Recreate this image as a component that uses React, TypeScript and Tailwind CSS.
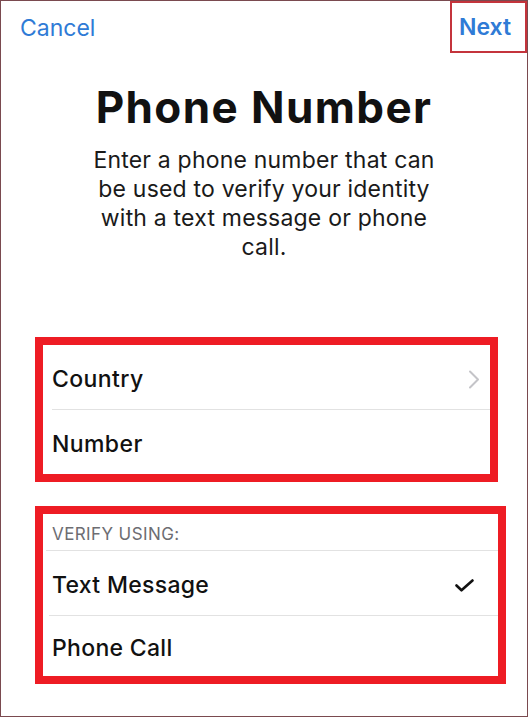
import React from "react";

function Chevron() {
  return (
    <svg width="12" height="19" viewBox="0 0 12 19" fill="none">
      <polyline points="2,1.5 10,9.5 2,17.5" stroke="#c4c4c8" strokeWidth="2" strokeLinecap="round" strokeLinejoin="round" />
    </svg>
  );
}

function Check() {
  return (
    <svg width="19" height="13" viewBox="0 0 19 13" fill="none">
      <polyline points="1.5,6.5 6.5,11.3 17.5,1.5" stroke="#111111" strokeWidth="2.6" strokeLinecap="round" strokeLinejoin="round" />
    </svg>
  );
}

export default function App() {
  return (
    <div className="w-[528px] h-[717px] border border-[#7a4a4f] bg-white flex flex-col font-['Inter',sans-serif] text-[#111111] overflow-hidden">
      <div className="flex justify-between items-start h-[52px]">
        <div className="pl-[19px] pt-[13px] text-[23px] leading-[28px] text-[#2f7bd6]">Cancel</div>
        <div className="w-[77px] h-[52px] border-2 border-[#c4343c] pl-[7px] pt-[10px] text-[23px] leading-[28px] font-semibold text-[#2f7bd6]">
          Next
        </div>
      </div>
      <h1 className="mt-[28px] text-center text-[44px] leading-[53px] font-bold tracking-[1.4px]">Phone Number</h1>
      <p className="mt-[12px] text-center text-[23px] leading-[29px] tracking-[0.2px] text-[#1a1a1a]">
        Enter a phone number that can
        <br />
        be used to verify your identity
        <br />
        with a text message or phone
        <br />
        call.
      </p>
      <div className="mt-[75px] ml-[34px] w-[463px] border-[8px] border-[#ee1c24] bg-white">
        <div className="h-[64px] flex items-center justify-between pl-[9px] pr-[10px] pt-[4px]">
          <span className="text-[23px] font-medium tracking-[0.4px]">Country</span>
          <Chevron />
        </div>
        <div className="ml-[9px] h-px bg-[#e2e2e2]" />
        <div className="h-[64px] flex items-center pl-[9px] pt-[4px]">
          <span className="text-[23px] font-medium tracking-[0.4px]">Number</span>
        </div>
      </div>
      <div className="mt-[24px] ml-[34px] w-[471px] border-[8px] border-[#ee1c24] bg-white">
        <div className="h-[36px] flex items-center pl-[9px] pt-[5px]">
          <span className="text-[17px] text-[#6d6d72] tracking-[0.4px]">VERIFY USING:</span>
        </div>
        <div className="ml-[3px] h-px bg-[#e2e2e2]" />
        <div className="h-[64px] flex items-center justify-between pl-[9px] pr-[24px] pt-[4px]">
          <span className="text-[23px] font-medium tracking-[0.3px]">Text Message</span>
          <Check />
        </div>
        <div className="ml-[6px] h-px bg-[#e2e2e2]" />
        <div className="h-[60px] flex items-center pl-[9px] pt-[5px]">
          <span className="text-[23px] font-medium tracking-[0.3px]">Phone Call</span>
        </div>
      </div>
    </div>
  );
}
